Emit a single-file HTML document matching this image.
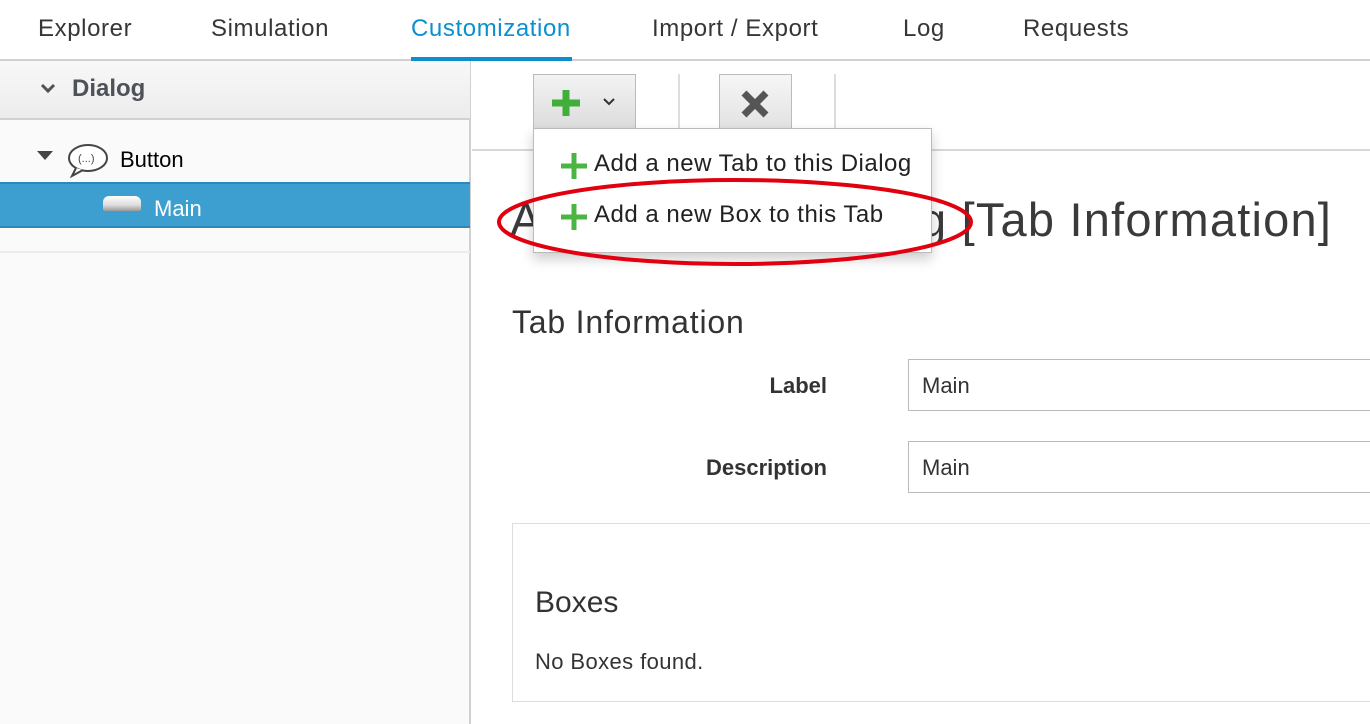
<!DOCTYPE html>
<html><head><style>
*{margin:0;padding:0;box-sizing:border-box}
body{width:1370px;height:724px;overflow:hidden;background:#fff;font-family:"Liberation Sans",sans-serif;color:#363636;position:relative}
.a{position:absolute;white-space:nowrap}
.nav{font-size:24px;top:15px;color:#363636;letter-spacing:0.6px}
</style></head><body>
<div class="a" style="left:0;top:0;width:1370px;height:61px;background:#fff;border-bottom:2px solid #d1d1d1"></div>
<div class="a nav" style="left:38px">Explorer</div>
<div class="a nav" style="left:211px">Simulation</div>
<div class="a nav" style="left:411px;color:#0b8fd1">Customization</div>
<div class="a" style="left:411px;top:57px;width:161px;height:4px;background:#0b8fd1"></div>
<div class="a nav" style="left:652px">Import / Export</div>
<div class="a nav" style="left:903px">Log</div>
<div class="a nav" style="left:1023px">Requests</div>

<div class="a" style="left:0;top:61px;width:471px;height:663px;background:#fafafa;border-right:2px solid #d1d1d1"></div>
<div class="a" style="left:0;top:61px;width:470px;height:59px;background:linear-gradient(#f8f8f8,#ececec);border-bottom:2px solid #d1d1d1"></div>
<svg class="a" style="left:40px;top:82px" width="16" height="12"><path d="M2 3 L8 9 L14 3" stroke="#4d5258" stroke-width="3" fill="none"/></svg>
<div class="a" style="left:72px;top:75px;font-size:24px;font-weight:bold;color:#4d5258">Dialog</div>
<svg class="a" style="left:36px;top:150px" width="18" height="12"><path d="M1 1 L17 1 L9 10Z" fill="#444"/></svg>
<svg class="a" style="left:66px;top:142px" width="44" height="36"><ellipse cx="22" cy="16" rx="19" ry="13" fill="#fff" stroke="#444" stroke-width="2"/><path d="M10 26 L6 34 L17 28" fill="#fff" stroke="#444" stroke-width="2"/><text x="12" y="20" font-size="11" fill="#444" font-family="Liberation Sans">(...)</text></svg>
<div class="a" style="left:120px;top:147px;font-size:22px;color:#000">Button</div>
<div class="a" style="left:0;top:182px;width:470px;height:46px;background:#3d9fcf;border-top:2px solid #2f86bd;border-bottom:2px solid #2f86bd"></div>
<div class="a" style="left:103px;top:196px;width:38px;height:15px;border-radius:6px 6px 2px 2px;background:linear-gradient(#fff,#ddd 60%,#999)"></div>
<div class="a" style="left:154px;top:196px;font-size:22px;color:#fff">Main</div>
<div class="a" style="left:0;top:251px;width:470px;height:2px;background:#ececec"></div>

<div class="a" style="left:472px;top:149px;width:898px;height:2px;background:#d8d8d8"></div>
<div class="a" style="left:533px;top:74px;width:103px;height:56px;background:linear-gradient(#f3f3f3,#dcdcdc);border:1px solid #bbb"></div>
<svg class="a" style="left:550px;top:88px" width="32" height="30"><path d="M16 2V28M2 15H30" stroke="#3fae3a" stroke-width="7"/></svg>
<svg class="a" style="left:602px;top:97px" width="14" height="10"><path d="M2 2L7 7L12 2" stroke="#333" stroke-width="2" fill="none"/></svg>
<div class="a" style="left:678px;top:74px;width:2px;height:56px;background:#ddd"></div>
<div class="a" style="left:719px;top:74px;width:73px;height:56px;background:linear-gradient(#f6f6f6,#e2e2e2);border:1px solid #bbb"></div>
<svg class="a" style="left:740px;top:89px" width="30" height="30"><path d="M4 4L26 26M26 4L4 26" stroke="#555" stroke-width="7"/></svg>
<div class="a" style="left:834px;top:74px;width:2px;height:56px;background:#ddd"></div>

<div class="a" style="left:510px;top:192px;font-size:47px;color:#3a3a3a">A</div>
<div class="a" style="left:920px;top:192px;font-size:47px;color:#3a3a3a;letter-spacing:1.2px">g [Tab Information]</div>

<div class="a" style="left:533px;top:128px;width:399px;height:125px;background:#fff;border:1px solid #bbb;box-shadow:0 6px 12px rgba(0,0,0,.2)"></div>
<svg class="a" style="left:559px;top:151px" width="30" height="30"><path d="M15 2V28M2 15H28" stroke="#4bb543" stroke-width="5"/></svg>
<div class="a" style="left:594px;top:150px;font-size:24px;color:#222;letter-spacing:0.5px">Add a new Tab to this Dialog</div>
<svg class="a" style="left:559px;top:202px" width="30" height="30"><path d="M15 2V28M2 15H28" stroke="#4bb543" stroke-width="5"/></svg>
<div class="a" style="left:594px;top:201px;font-size:24px;color:#222;letter-spacing:0.5px">Add a new Box to this Tab</div>
<svg class="a" style="left:490px;top:170px" width="490" height="100"><ellipse cx="245" cy="52" rx="236" ry="42" fill="none" stroke="#e0000f" stroke-width="4"/></svg>

<div class="a" style="left:512px;top:304px;font-size:32px;color:#333;letter-spacing:0.8px">Tab Information</div>
<div class="a" style="left:600px;top:373px;width:227px;text-align:right;font-size:22px;font-weight:bold;color:#333">Label</div>
<div class="a" style="left:908px;top:359px;width:470px;height:52px;border:1px solid #bbb;background:#fff"></div>
<div class="a" style="left:922px;top:373px;font-size:22px;color:#333">Main</div>
<div class="a" style="left:600px;top:455px;width:227px;text-align:right;font-size:22px;font-weight:bold;color:#333">Description</div>
<div class="a" style="left:908px;top:441px;width:470px;height:52px;border:1px solid #bbb;background:#fff"></div>
<div class="a" style="left:922px;top:455px;font-size:22px;color:#333">Main</div>
<div class="a" style="left:512px;top:523px;width:870px;height:179px;border:1px solid #ddd;background:#fff"></div>
<div class="a" style="left:535px;top:586px;font-size:30px;color:#333">Boxes</div>
<div class="a" style="left:535px;top:649px;font-size:22px;color:#333;letter-spacing:0.4px">No Boxes found.</div>
</body></html>
